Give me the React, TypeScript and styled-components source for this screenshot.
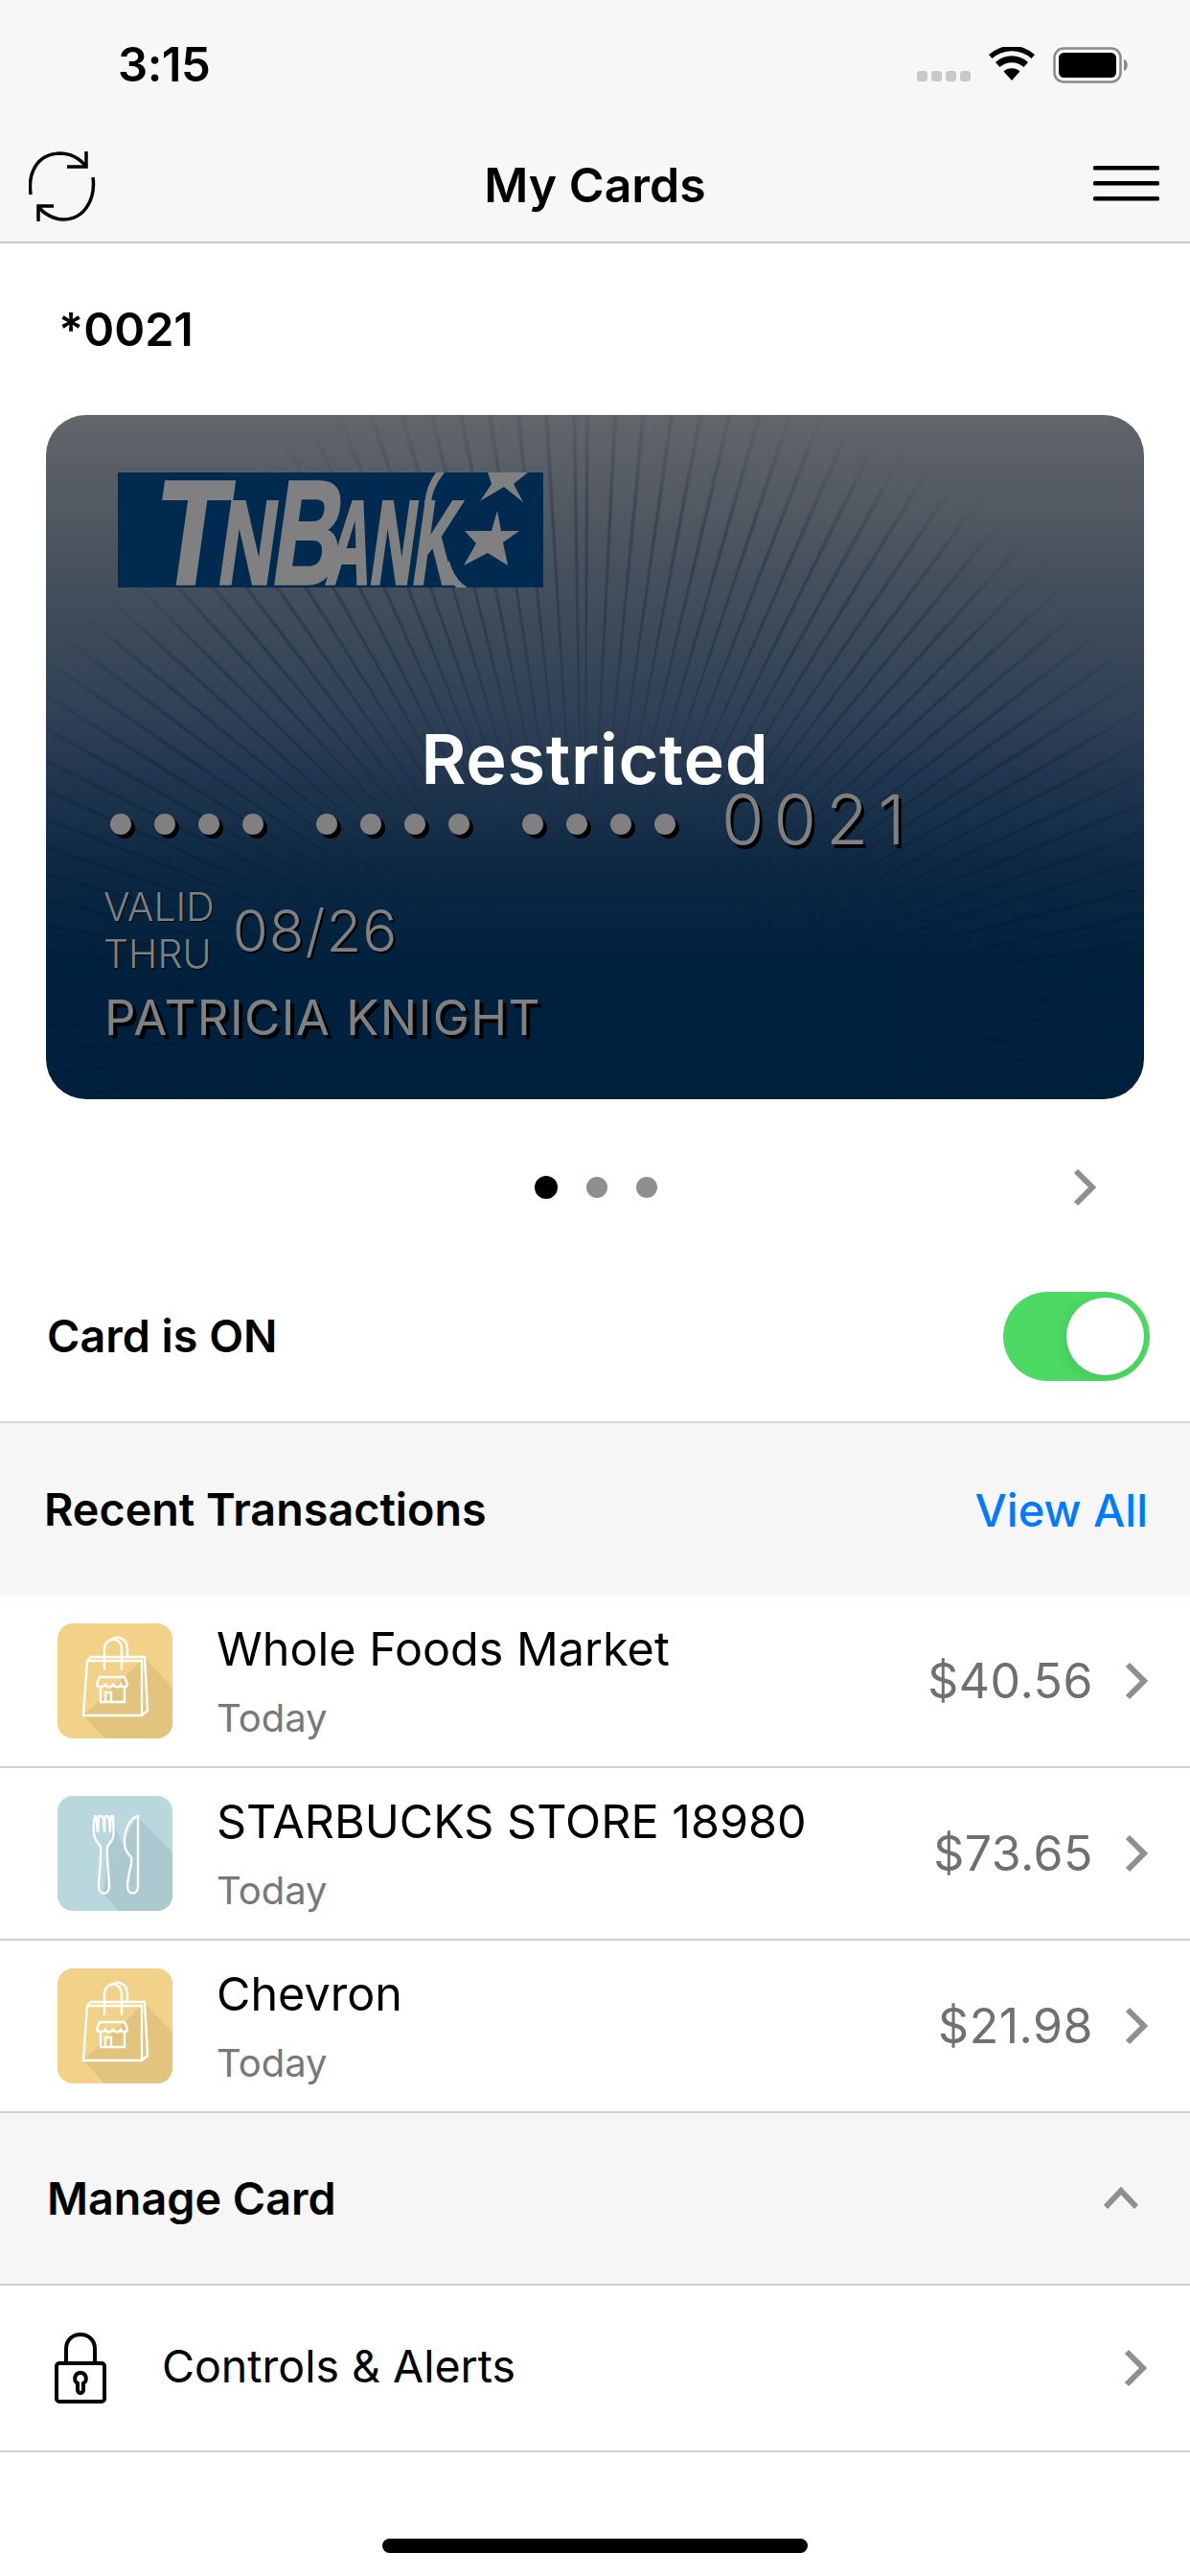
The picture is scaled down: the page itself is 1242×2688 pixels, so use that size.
import styled, { createGlobalStyle } from "styled-components";

const GlobalStyle = createGlobalStyle`
  html, body {
    margin: 0;
    padding: 0;
    background: #fff;
  }
  body {
    font-family: Inter, "Liberation Sans", sans-serif;
    color: #000;
  }
`;

const Screen = styled.div`
  position: relative;
  width: 1242px;
  height: 2688px;
  overflow: hidden;
  background: #fff;
`;

const TopBars = styled.header`
  height: 252px;
  background: #f7f7f7;
  border-bottom: 2px solid #c8c8c8;
  box-sizing: content-box;
`;

const StatusBar = styled.div`
  height: 134px;
  display: flex;
  align-items: flex-start;
  justify-content: space-between;
  padding: 44px 63px 0 123px;
  box-sizing: border-box;
`;

const Clock = styled.span`
  font-size: 49px;
  font-weight: 600;
  line-height: 48px;
  letter-spacing: -0.5px;
`;

const StatusIcons = styled.div`
  display: flex;
  align-items: flex-start;
  padding-top: 5px;
`;

const NavBar = styled.div`
  height: 118px;
  display: flex;
  align-items: center;
  justify-content: space-between;
  padding: 0 32px 0 30px;
  position: relative;
`;

const NavTitle = styled.div`
  position: absolute;
  left: 0;
  right: 0;
  top: 29px;
  text-align: center;
  font-size: 50px;
  font-weight: 600;
  line-height: 60px;
`;

const CardSection = styled.section`
  padding: 0 48px;
`;

const CardLabel = styled.div`
  padding: 65px 0 0 13px;
  height: 179px;
  box-sizing: border-box;
  font-size: 48.5px;
  font-weight: 600;
  line-height: 50px;
`;

const CardFace = styled.div`
  position: relative;
  height: 714px;
  border-radius: 42px;
  overflow: hidden;
  padding: 60px 75px 0;
  box-sizing: border-box;
  background: linear-gradient(180deg, #63666b 0%, #4a535e 20%, #2e3f55 45%, #0d2843 66%, #00213d 80%, #00213d 100%);
  &::before {
    content: "";
    position: absolute;
    inset: 0;
    background: repeating-conic-gradient(
      from 0deg at 49% 90%,
      rgba(0, 24, 50, 0) 0deg,
      rgba(0, 24, 50, 0.34) 0.3deg,
      rgba(0, 24, 50, 0) 0.6deg,
      rgba(0, 24, 50, 0) 2.6deg
    );
    -webkit-mask-image: radial-gradient(circle at 49% 90%, transparent 200px, #000 430px, #000 540px, transparent 690px);
    mask-image: radial-gradient(circle at 49% 90%, transparent 200px, #000 430px, #000 540px, transparent 690px);
  }
`;

const CardContent = styled.div`
  position: relative;
`;

const Logo = styled.svg`
  display: block;
  width: 444px;
  height: 120px;
  overflow: visible;
`;

const RestrictedTag = styled.div`
  position: absolute;
  left: -75px;
  right: -75px;
  top: 256px;
  text-align: center;
  color: #fff;
  font-size: 72px;
  line-height: 86px;
  font-weight: 600;
  letter-spacing: 0.7px;
`;

const PanRow = styled.div`
  height: 85px;
  margin: 204px 0 0 -8px;
  display: flex;
  align-items: center;
`;

const DotGroup = styled.div`
  display: flex;
  gap: 24px;
  margin-right: 55px;
`;

const PanDot = styled.span`
  width: 22px;
  height: 22px;
  border-radius: 50%;
  background: #808080;
  box-shadow: 4px 4px 0 #000;
`;

const PanDigits = styled.span`
  margin-left: -7px;
  margin-top: -10px;
  color: #808080;
  font-size: 72px;
  font-weight: 300;
  line-height: 72px;
  letter-spacing: 10px;
  text-shadow: 3px 4px 0 #000;
`;

const ValidRow = styled.div`
  display: flex;
  align-items: center;
  margin: 20px 0 0 -15px;
`;

const ValidLabel = styled.div`
  color: #808080;
  font-size: 41px;
  font-weight: 300;
  line-height: 49px;
  text-shadow: 1px 1px 0 #000;
`;

const ValidDate = styled.span`
  margin-left: 19px;
  color: #808080;
  font-size: 60px;
  font-weight: 300;
  letter-spacing: 1px;
  text-shadow: 2px 2px 0 #000;
`;

const HolderName = styled.div`
  margin: 12px 0 0 -14px;
  color: #808080;
  font-size: 51px;
  line-height: 60px;
  font-weight: 400;
  letter-spacing: 1.4px;
  text-shadow: 4px 4px 0 #000;
`;

const Pager = styled.div`
  height: 161px;
  padding: 23px 0 0 558px;
  margin: 0 -48px;
  box-sizing: border-box;
  display: flex;
  align-items: center;
`;

const PagerDots = styled.div`
  display: flex;
  align-items: center;
  gap: 30px;
  width: 562px;
`;

const PagerDot = styled.span<{ $active?: boolean }>`
  width: ${(p) => (p.$active ? 24 : 22)}px;
  height: ${(p) => (p.$active ? 24 : 22)}px;
  border-radius: 50%;
  background: ${(p) => (p.$active ? "#000" : "#8f8f8f")};
`;

const ToggleRow = styled.div`
  height: 178px;
  margin-top: -3px;
  display: flex;
  align-items: center;
  justify-content: space-between;
  padding: 0 42px 0 49px;
  border-bottom: 2px solid #d6d6d6;
`;

const RowTitle = styled.span`
  font-size: 46.7px;
  font-weight: 600;
  line-height: 56px;
`;

const Toggle = styled.div`
  width: 153px;
  height: 93px;
  border-radius: 47px;
  background: #4cd964;
  display: flex;
  align-items: center;
  justify-content: flex-end;
  padding-right: 6px;
  box-sizing: border-box;
`;

const ToggleKnob = styled.span`
  width: 81px;
  height: 81px;
  border-radius: 50%;
  background: #fff;
  box-shadow: -4px 4px 14px rgba(0, 0, 0, 0.08);
`;

const SectionHead = styled.div<{ $height: number; $left: number }>`
  height: ${(p) => p.$height}px;
  background: #f6f6f6;
  display: flex;
  align-items: center;
  justify-content: space-between;
  padding: 0 44px 0 ${(p) => p.$left}px;
  box-sizing: border-box;
`;

const ViewAll = styled.span`
  color: #007aff;
  font-size: 47px;
  font-weight: 500;
`;

const TxRow = styled.div`
  height: 180px;
  display: flex;
  align-items: center;
  padding: 0 44px 0 60px;
  border-bottom: 2px solid #d1d1d1;
  box-sizing: border-box;
`;

const TxIcon = styled.svg`
  flex: none;
  width: 120px;
  height: 120px;
  border-radius: 16px;
  margin-right: 46px;
`;

const TxText = styled.div`
  flex: 1;
  min-width: 0;
`;

const TxName = styled.div`
  font-size: 48.5px;
  line-height: 60px;
`;

const TxDate = styled.div`
  margin-top: 17px;
  color: #77777c;
  font-size: 40px;
  line-height: 50px;
`;

const TxAmount = styled.span`
  color: #6f6f74;
  font-size: 50px;
  letter-spacing: 0.5px;
  margin-right: 33px;
`;

const Chevron = styled.svg`
  display: block;
  flex: none;
`;

const ManageRow = styled.div`
  height: 172px;
  display: flex;
  align-items: center;
  padding: 0 45px 0 57px;
  border-top: 2px solid #d1d1d1;
  border-bottom: 2px solid #d1d1d1;
  box-sizing: content-box;
`;

const ManageLabel = styled.span`
  flex: 1;
  margin: 0 0 5px 58px;
  font-size: 46.5px;
`;

const HomeBar = styled.div`
  position: absolute;
  left: 399px;
  bottom: 24px;
  width: 444px;
  height: 15px;
  border-radius: 8px;
  background: #000;
`;

const GRAY_CHEVRON = "#8e8e93";

function ChevronRight({ width = 24, height = 40 }: { width?: number; height?: number }) {
  return (
    <Chevron width={width} height={height} viewBox="0 0 24 40" fill="none">
      <path d="M3 3 L20 20 L3 37" stroke={GRAY_CHEVRON} strokeWidth="6" />
    </Chevron>
  );
}

function SignalDots() {
  return (
    <svg width="56" height="36" viewBox="0 0 56 36" style={{ marginRight: 19 }}>
      {[0, 15, 30, 45].map((x) => (
        <rect key={x} x={x} y="25" width="11" height="11" rx="3.5" fill="#c8c8c8" />
      ))}
    </svg>
  );
}

function WifiIcon() {
  return (
    <svg width="48" height="36" viewBox="0 0 48 36" style={{ marginRight: 19 }}>
      <path d="M24 35 L15.5 25.5 A13 13 0 0 1 32.5 25.5 Z" fill="#000" />
      <path d="M11.5 21 L7 16 A25 25 0 0 1 41 16 L36.5 21 A19 19 0 0 0 11.5 21 Z" fill="#000" />
      <path d="M3.5 12 L0 8 A36 36 0 0 1 48 8 L44.5 12 A31 31 0 0 0 3.5 12 Z" fill="#000" />
    </svg>
  );
}

function BatteryIcon() {
  return (
    <svg width="80" height="38" viewBox="0 0 80 38">
      <rect x="1.5" y="1.5" width="69" height="35" rx="9.5" fill="none" stroke="#8a8a8a" strokeWidth="2.5" />
      <rect x="6" y="6" width="60" height="26" rx="5.5" fill="#000" />
      <path d="M74 13 C79 14 79 24 74 25 Z" fill="#8a8a8a" />
    </svg>
  );
}

function SyncIcon() {
  return (
    <svg width="70" height="80" viewBox="0 0 70 80" fill="none" stroke="#000" strokeWidth="3.5">
      <path d="M2 50 C-1 28 8 8 32 7 C43 7 53 12 60 21" />
      <path d="M60 5 V21 H40" />
      <path d="M67 32 C70 55 58 76 36 76 C26 76 16 70 10 63" />
      <path d="M10 78 V62 H26" />
    </svg>
  );
}

function MenuIcon() {
  return (
    <svg width="69" height="40" viewBox="0 0 69 40" fill="#000">
      <rect y="0" width="69" height="4.5" rx="1.5" />
      <rect y="16" width="69" height="4.5" rx="1.5" />
      <rect y="32" width="69" height="4.5" rx="1.5" />
    </svg>
  );
}

function BankLogo() {
  const gray = "#808080";
  const letter = { fontFamily: '"Liberation Sans", sans-serif', fontWeight: 700, lengthAdjust: "spacingAndGlyphs" } as const;
  return (
    <Logo viewBox="0 0 444 120">
      <rect width="444" height="120" fill="#002a50" />
      <path d="M332 0 H341 C333 10 328 20 327 32 L320 34 C321 20 325 10 332 0 Z" fill={gray} />
      <path d="M346 92 C349 104 355 114 365 120 H353 C347 114 343 104 342 96 Z" fill={gray} />
      <g transform="translate(0 116) skewX(-8)" fill={gray} stroke={gray} strokeWidth="3.5">
        <text x="34" y="0" fontSize="154" textLength="74" {...letter}>T</text>
        <text x="102" y="0" fontSize="124" textLength="58" {...letter}>N</text>
        <text x="158" y="0" fontSize="154" textLength="70" {...letter}>B</text>
        <text x="216" y="0" fontSize="124" textLength="134" {...letter}>ANK</text>
      </g>
      <polygon points="386,0 428,0 413,12 423,31 403,15 378,30 390,12" fill={gray} />
      <polygon points="396,40 400,61 419,61 402,73 407,97 386,84 361,97 374,74 362,61 390,61" fill={gray} />
    </Logo>
  );
}

function BagIcon() {
  return (
    <TxIcon viewBox="0 0 120 120">
      <rect width="120" height="120" fill="#f2d289" />
      <polygon points="91,36 120,67 120,120 49,120 27,96" fill="#e2c47f" />
      <g fill="none" stroke="#fff" strokeWidth="2.4">
        <path d="M27 96 L31 39 L35 35 H91 L94 91 L88 96 Z" />
        <path d="M31 39 H88 L88 96" />
        <path d="M49 49 V27 C49 13 67 13 67 27 V49" />
        <path d="M55 18 C60 12 73 14 73 27 V36" />
        <path d="M44 56 H70 L73 63 C73 67 67 67 66 64 C65 67 60 67 58 64 C56 67 51 67 50 64 C48 67 41 67 41 63 Z" />
        <path d="M45 67 V82 H70 V67" />
        <path d="M50 82 V72 H56 V82" />
      </g>
    </TxIcon>
  );
}

function DiningIcon() {
  return (
    <TxIcon viewBox="0 0 120 120">
      <rect width="120" height="120" fill="#b8d8de" />
      <polygon points="83,21 120,59 120,120 64,120 48,102 54,52 58,28 68,52" fill="#acc9d0" />
      <g fill="none" stroke="#fff" strokeWidth="2.4">
        <path d="M39 21 C37 32 37 41 40 46 L45 53 C46 66 43 84 43 95 C43 104 54 104 54 95 C54 84 51 66 52 53 L57 46 C60 41 58 32 58 21 C55 20 55 24 55 38 C54 24 54 20 51 21 C49 21 49 24 49 38 C48 24 48 20 45 21 C42 20 43 26 42 38 C41 28 41 21 39 21 Z" />
        <path d="M84 21 C75 23 69 38 70 50 C70 57 74 61 77 64 C79 70 73 82 73 94 C73 104 84 104 84 94 Z" />
      </g>
    </TxIcon>
  );
}

function LockIcon() {
  return (
    <svg width="54" height="74" viewBox="0 0 54 74" fill="none" stroke="#000" strokeWidth="4" style={{ flex: "none" }}>
      <rect x="2" y="32" width="50" height="40" rx="3" />
      <path d="M12 32 V17 C12 -3 42 -3 42 17 V32" />
      <path d="M27 42 C21 42 19 50 24 53 V60 C24 64 30 64 30 60 V53 C35 50 33 42 27 42 Z" />
    </svg>
  );
}

const transactions = [
  { name: "Whole Foods Market", amount: "$40.56", icon: <BagIcon /> },
  { name: "STARBUCKS STORE 18980", amount: "$73.65", icon: <DiningIcon /> },
  { name: "Chevron", amount: "$21.98", icon: <BagIcon /> },
];

function App() {
  return (
    <Screen>
      <GlobalStyle />
      <TopBars>
        <StatusBar>
          <Clock>3:15</Clock>
          <StatusIcons>
            <SignalDots />
            <WifiIcon />
            <BatteryIcon />
          </StatusIcons>
        </StatusBar>
        <NavBar>
          <SyncIcon />
          <NavTitle>My Cards</NavTitle>
          <MenuIcon />
        </NavBar>
      </TopBars>

      <CardSection>
        <CardLabel>*0021</CardLabel>
        <CardFace>
          <CardContent>
            <BankLogo />
            <RestrictedTag>Restricted</RestrictedTag>
            <PanRow>
              {[0, 1, 2].map((g) => (
                <DotGroup key={g}>
                  <PanDot />
                  <PanDot />
                  <PanDot />
                  <PanDot />
                </DotGroup>
              ))}
              <PanDigits>0021</PanDigits>
            </PanRow>
            <ValidRow>
              <ValidLabel>
                VALID
                <br />
                THRU
              </ValidLabel>
              <ValidDate>08/26</ValidDate>
            </ValidRow>
            <HolderName>PATRICIA KNIGHT</HolderName>
          </CardContent>
        </CardFace>
        <Pager>
          <PagerDots>
            <PagerDot $active />
            <PagerDot />
            <PagerDot />
          </PagerDots>
          <ChevronRight />
        </Pager>
      </CardSection>

      <ToggleRow>
        <RowTitle>Card is ON</RowTitle>
        <Toggle>
          <ToggleKnob />
        </Toggle>
      </ToggleRow>

      <SectionHead $height={180} $left={46}>
        <RowTitle>Recent Transactions</RowTitle>
        <ViewAll>View All</ViewAll>
      </SectionHead>

      {transactions.map((t) => (
        <TxRow key={t.name}>
          {t.icon}
          <TxText>
            <TxName>{t.name}</TxName>
            <TxDate>Today</TxDate>
          </TxText>
          <TxAmount>{t.amount}</TxAmount>
          <ChevronRight />
        </TxRow>
      ))}

      <SectionHead $height={178} $left={49}>
        <RowTitle>Manage Card</RowTitle>
        <Chevron width="36" height="24" viewBox="0 0 36 24" fill="none" style={{ marginRight: 10 }}>
          <path d="M2 21 L18 4 L34 21" stroke={GRAY_CHEVRON} strokeWidth="6" />
        </Chevron>
      </SectionHead>

      <ManageRow>
        <LockIcon />
        <ManageLabel>Controls &amp; Alerts</ManageLabel>
        <ChevronRight />
      </ManageRow>

      <HomeBar />
    </Screen>
  );
}

export default App;
